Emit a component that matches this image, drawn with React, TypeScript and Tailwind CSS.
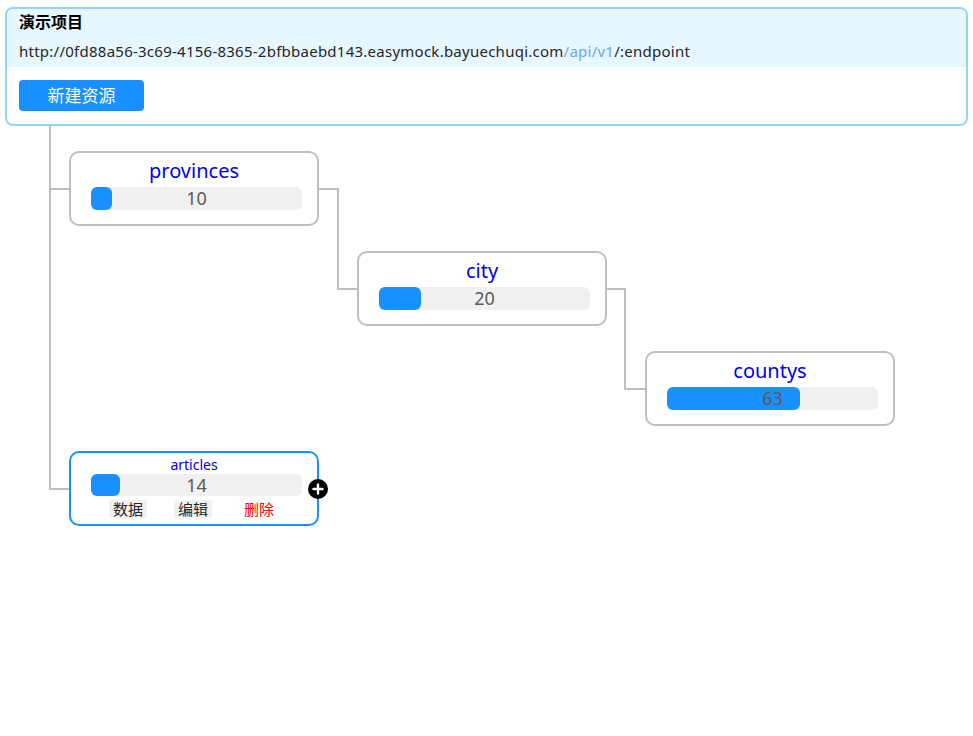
import React from "react";

const font = { fontFamily: '"Noto Sans", "Noto Sans CJK SC", sans-serif' };

type NodeProps = { name: string; value: number; left: number; top: number };

function Node({ name, value, left, top }: NodeProps) {
  return (
    <div
      className="absolute flex w-[250px] h-[75px] flex-col rounded-[10px] border-2 border-[#bfbfbf] bg-white"
      style={{ left, top }}
    >
      <div className="h-[34px] pt-[5px] text-center text-[20px] leading-[26px] text-[#0000ee]">{name}</div>
      <div className="relative ml-[20px] h-[23px] w-[211px] rounded-[6px] bg-[#f0f0f0]">
        <div className="absolute left-0 top-0 h-[23px] rounded-[6px] bg-[#1890ff]" style={{ width: `${(value / 100) * 211}px` }} />
        <div className="relative text-center text-[18px] leading-[23px] text-[#595959]">{value}</div>
      </div>
    </div>
  );
}

export default function App() {
  return (
    <div className="w-[973px] h-[736px] bg-white text-[#262626] overflow-hidden" style={font}>
      <div className="mx-[5px] mt-[7px] w-[963px] rounded-[8px] border-2 border-[#91d5ff] overflow-hidden">
        <div className="h-[58px] bg-[#e6f7ff] px-[12px] pt-[1px]">
          <div className="text-[16px] font-bold leading-[24px] text-black">演示项目</div>
          <div className="mt-[5px] text-[15px] tracking-[0.25px] leading-[24px] text-[#262626] whitespace-nowrap">
            http://0fd88a56-3c69-4156-8365-2bfbbaebd143.easymock.bayuechuqi.com
            <span className="text-[#6ba4f8]">/api/v1</span>/:endpoint
          </div>
        </div>
        <div className="px-[12px] pt-[13px] pb-[13px]">
          <button className="h-[31px] w-[125px] rounded-[4px] bg-[#1890ff] text-[17px] text-white">新建资源</button>
        </div>
      </div>

      <div className="relative -mt-[1px] h-[600px]">
        <svg className="absolute left-0 top-0" width="973" height="600" viewBox="0 0 973 600">
          <g stroke="#bfbfbf" strokeWidth="2" fill="none">
            <path d="M50 0 V365" />
            <path d="M50 64 H70" />
            <path d="M50 364 H70" />
            <path d="M318 64 H338 V164 H358" />
            <path d="M606 164 H625 V264 H646" />
          </g>
        </svg>

        <Node name="provinces" value={10} left={69} top={26} />
        <Node name="city" value={20} left={357} top={126} />
        <Node name="countys" value={63} left={645} top={226} />

        <div className="absolute left-[69px] top-[326px] flex w-[250px] h-[75px] flex-col rounded-[10px] border-2 border-[#1890ff] bg-white">
          <div className="h-[21px] pt-[3px] text-center text-[14px] leading-[18px] text-[#0000ee]">articles</div>
          <div className="relative ml-[20px] h-[22px] w-[211px] rounded-[6px] bg-[#f0f0f0]">
            <div className="absolute left-0 top-0 h-[22px] w-[29px] rounded-[6px] bg-[#1890ff]" />
            <div className="relative text-center text-[18px] leading-[22px] text-[#595959]">14</div>
          </div>
          <div className="mt-[4px] flex h-[18px] pl-[38px] text-[15px] leading-[18px]">
            <span className="rounded-[3px] bg-[#f0f0f0] px-[4px] text-[#262626]">数据</span>
            <span className="ml-[27px] rounded-[3px] bg-[#f0f0f0] px-[4px] text-[#262626]">编辑</span>
            <span className="ml-[32px] text-[#ff0000]">删除</span>
          </div>
          <div className="absolute right-[-11px] top-[26px] flex h-[20px] w-[20px] items-center justify-center rounded-full bg-black">
            <svg width="12" height="12" viewBox="0 0 12 12">
              <path d="M6 1.5v9M1.5 6h9" stroke="white" strokeWidth="2.4" strokeLinecap="round" />
            </svg>
          </div>
        </div>
      </div>
    </div>
  );
}
